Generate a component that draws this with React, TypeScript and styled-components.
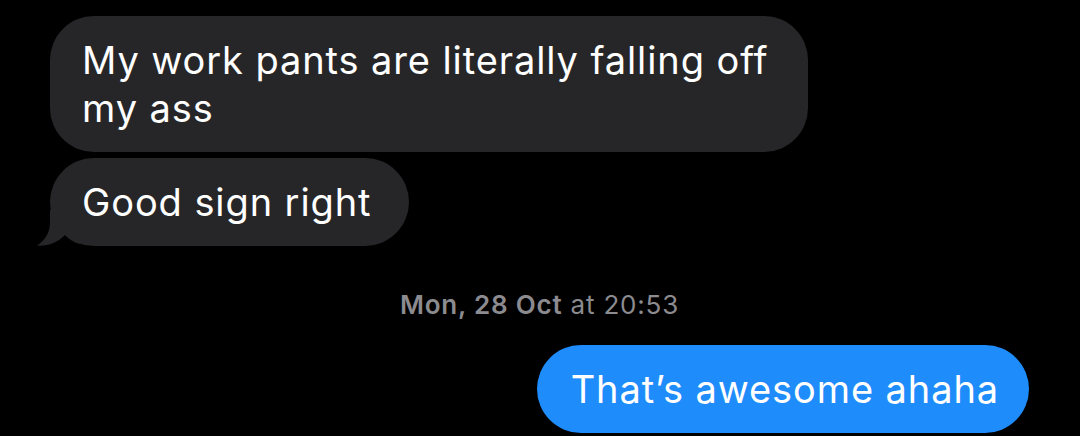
import styled, { createGlobalStyle } from "styled-components";

const GlobalStyle = createGlobalStyle`
    html, body {
        margin: 0;
        padding: 0;
        background: #000000;
    }
    body {
        font-family: 'Inter', 'Noto Sans', sans-serif;
        -webkit-font-smoothing: antialiased;
    }
`;

const Thread = styled.main`
    width: 1080px;
    height: 436px;
    box-sizing: border-box;
    padding: 16px 51px 0 50px;
    display: flex;
    flex-direction: column;
    overflow: hidden;
`;

const Group = styled.div<{ $side: "in" | "out" }>`
    display: flex;
    flex-direction: column;
    align-items: ${(p) => (p.$side === "in" ? "flex-start" : "flex-end")};
    gap: 6px;
`;

const Bubble = styled.div<{ $side: "in" | "out" }>`
    position: relative;
    max-width: 758px;
    box-sizing: border-box;
    padding: ${(p) => (p.$side === "in" ? "20px 38px 20px 32px" : "20px 30px 20px 34px")};
    border-radius: 44px;
    font-size: 38px;
    line-height: 48px;
    letter-spacing: 0.9px;
    color: #ffffff;
    background: ${(p) => (p.$side === "in" ? "#262628" : "#1f8cfc")};
`;

const Tail = styled.svg`
    position: absolute;
    left: -14px;
    bottom: 0;
    width: 44px;
    height: 36px;
`;

const Stamp = styled.div`
    margin: 44px 0 25px;
    text-align: center;
    font-size: 26px;
    line-height: 30px;
    letter-spacing: 0.8px;
    color: #8b8b90;

    b {
        font-weight: 600;
    }
`;

export default function App() {
    return (
        <>
            <GlobalStyle />
            <Thread>
                <Group $side="in">
                    <Bubble $side="in">My work pants are literally falling off my ass</Bubble>
                    <Bubble $side="in">
                        Good sign right
                        <Tail viewBox="0 0 44 36">
                            <path
                                d="M14 0 L14 12 C14 24 8 31 1 35.5 C11 36.5 21 33 29 25 C34 30 39 33 44 34 L44 0 Z"
                                fill="#262628"
                            />
                        </Tail>
                    </Bubble>
                </Group>
                <Stamp>
                    <b>Mon, 28 Oct</b> at 20:53
                </Stamp>
                <Group $side="out">
                    <Bubble $side="out">That’s awesome ahaha</Bubble>
                </Group>
            </Thread>
        </>
    );
}
